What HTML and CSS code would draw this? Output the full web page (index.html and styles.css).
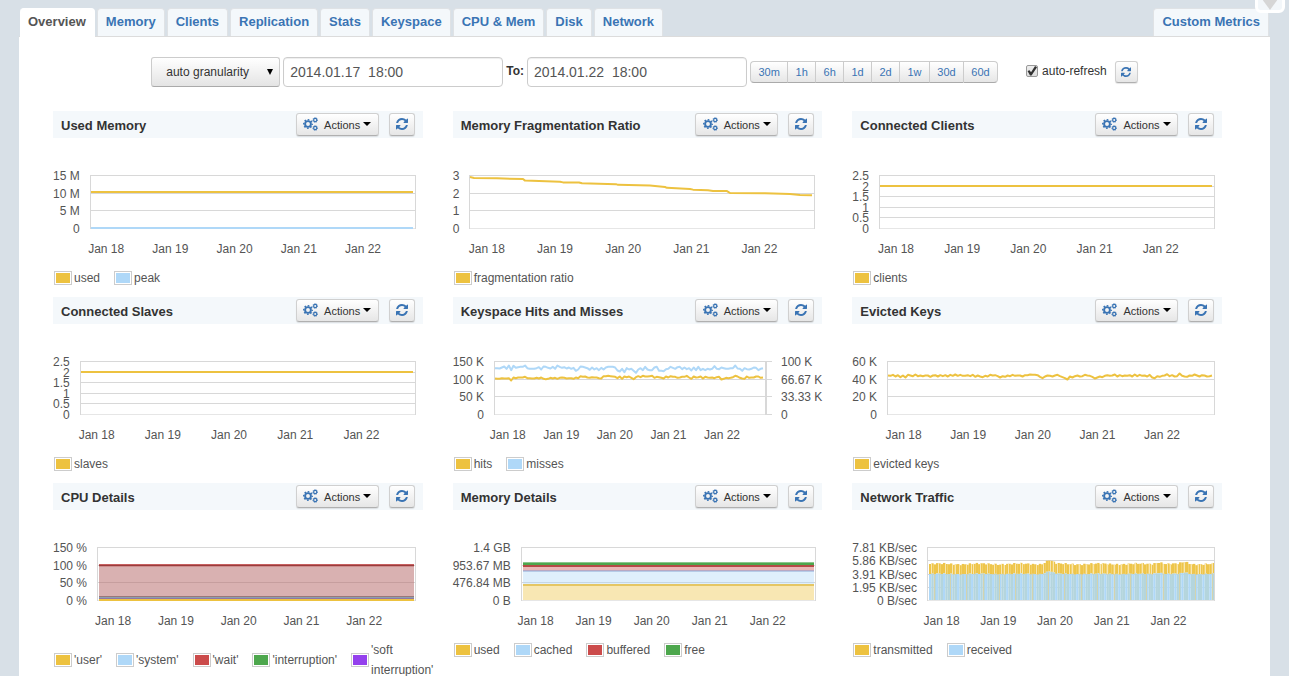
FILE: index.html
```html
<!DOCTYPE html>
<html lang="en">
<head>
<meta charset="utf-8">
<title>Redis Overview</title>
<link rel="stylesheet" href="styles.css">
</head>
<body>
<svg class="defs" aria-hidden="true">
  <symbol id="refresh" viewBox="0 0 1536 1536"><path d="M1511 928q0 5-1 7-64 268-268 434.500t-478 166.500q-146 0-282.500-55t-243.500-157l-129 129q-19 19-45 19t-45-19-19-45v-448q0-26 19-45t45-19h448q26 0 45 19t19 45-19 45l-137 137q71 66 161 102t187 36q134 0 250-65t186-179q11-17 53-117 8-23 30-23h192q13 0 22.500 9.500t9.500 22.500zm25-800v448q0 26-19 45t-45 19h-448q-26 0-45-19t-19-45 19-45l138-138q-148-137-349-137-134 0-250 65t-186 179q-11 17-53 117-8 23-30 23h-199q-13 0-22.500-9.500t-9.500-22.500v-7q65-268 270-434.500t480-166.500q146 0 284 55.500t245 156.500l130-129q19-19 45-19t45 19 19 45z"/></symbol>
  <symbol id="cogs" viewBox="0 0 15 14"><g fill="none" stroke="currentColor">
    <circle cx="5" cy="7" r="2.900" stroke-width="1.900"/>
    <circle cx="5" cy="7" r="4.300" stroke-width="1.400" stroke-dasharray="1.700 1.677" stroke-dashoffset=".85"/>
    <circle cx="12.200" cy="3" r="1.600" stroke-width="1.200"/>
    <circle cx="12.200" cy="3" r="2.400" stroke-width=".8" stroke-dasharray="1 .885"/>
    <circle cx="12.200" cy="11" r="1.600" stroke-width="1.200"/>
    <circle cx="12.200" cy="11" r="2.400" stroke-width=".8" stroke-dasharray="1 .885"/>
  </g></symbol>
</svg>

<div class="dropdown-tab"></div>

<nav class="tabs">
  <a class="tab active" href="#">Overview</a>
  <a class="tab" href="#">Memory</a>
  <a class="tab" href="#">Clients</a>
  <a class="tab" href="#">Replication</a>
  <a class="tab" href="#">Stats</a>
  <a class="tab" href="#">Keyspace</a>
  <a class="tab" href="#">CPU &amp; Mem</a>
  <a class="tab" href="#">Disk</a>
  <a class="tab" href="#">Network</a>
  <a class="tab custom" href="#">Custom Metrics</a>
</nav>

<main class="panel">
  <form class="toolbar">
    <div class="select-wrap">
      <select class="granularity" aria-label="Granularity"><option>auto granularity</option></select>
      <span class="select-arrow"></span>
    </div>
    <input class="date" type="text" aria-label="From" value="2014.01.17  18:00">
    <label class="to" for="to">To:</label>
    <input class="date" id="to" type="text" value="2014.01.22  18:00">
    <div class="ranges">
      <button type="button">30m</button><button type="button">1h</button><button type="button">6h</button><button type="button">1d</button><button type="button">2d</button><button type="button">1w</button><button type="button">30d</button><button type="button">60d</button>
    </div>
    <label class="auto"><input class="check" type="checkbox" checked>auto-refresh</label>
    <button class="btn reload" type="button" aria-label="Refresh"><svg><use href="#refresh"/></svg></button>
  </form>

  <div class="cards" id="cards"></div>
</main>

<template id="card">
  <section class="card">
    <header class="card-head">
      <h2></h2>
      <button class="btn actions" type="button"><svg><use href="#cogs"/></svg>Actions<span class="caret"></span></button>
      <button class="btn refresh" type="button" aria-label="Refresh"><svg><use href="#refresh"/></svg></button>
    </header>
    <div class="chart">
      <div class="y-axis"></div>
      <svg class="plot"></svg>
      <div class="y-axis right"></div>
      <div class="x-axis"><span>Jan 18</span><span>Jan 19</span><span>Jan 20</span><span>Jan 21</span><span>Jan 22</span></div>
    </div>
    <ul class="legend"></ul>
  </section>
</template>
<script src="charts.js"></script>
</body>
</html>
```
FILE: styles.css
```css
* { box-sizing: border-box; }

body {
  margin: 0;
  background: #d8e0e7;
  color: #545454;
  font: 12px/20px "Liberation Sans", Arial, sans-serif;
  overflow: hidden;
}

.defs { position: absolute; width: 0; height: 0; }

.dropdown-tab {
  position: absolute;
  top: -10px;
  right: 4px;
  width: 30px;
  height: 23px;
  border: 3px solid #fff;
  border-radius: 6px;
  background: #f3f7fa;
}
.dropdown-tab::after {
  content: "";
  position: absolute;
  left: 4px;
  bottom: 0;
  border: 8px solid transparent;
  border-top: 11px solid #d6d6d6;
  border-bottom: 0;
}

.tabs {
  display: flex;
  gap: 2px;
  margin: 0 19px;
  padding: 8px 1px 0;
  border-bottom: 1px solid #dcdcdc;
}
.tab {
  height: 28px;
  padding: 0 8px;
  border: 1px solid #dfe2e5;
  border-width: 1px 1px 0 0;
  border-radius: 4px 4px 0 0;
  background: #f4f8fb;
  color: #3a74b4;
  font-size: 13px;
  font-weight: bold;
  line-height: 26px;
  text-decoration: none;
}
.tab.active { height: 29px; margin-bottom: -1px; background: #fff; border-color: #fff; color: #555; }
.tab + .tab { border-left-width: 1px; }
.tab.custom { margin-left: auto; }

.panel {
  margin: 0 19px;
  padding: 20px 48px 20px 34px;
  background: #fff;
}

.toolbar {
  display: flex;
  align-items: center;
  justify-content: center;
  gap: 3px;
  margin: 0 -14px 24px 0;
}
.select-wrap { position: relative; }
.granularity {
  appearance: none;
  display: block;
  width: 129px;
  height: 30px;
  padding: 0 28px 0 14px;
  border: 1px solid #ccc;
  border-bottom-color: #aaa;
  border-radius: 3px;
  background: linear-gradient(#fff, #e4e4e4);
  color: #333;
  font: 12px "Liberation Sans", Arial, sans-serif;
}
.select-arrow {
  position: absolute;
  top: 12px;
  right: 7px;
  border: 3px solid transparent;
  border-top: 6px solid #000;
  border-bottom: 0;
  pointer-events: none;
}
.date {
  width: 220px;
  height: 30px;
  padding: 0 6px;
  border: 1px solid #ccc;
  border-radius: 4px;
  background: #fff;
  box-shadow: inset 0 1px 1px rgba(0, 0, 0, .07);
  color: #555;
  font: 14px "Liberation Sans", Arial, sans-serif;
  white-space: pre;
}
.to { padding-bottom: 2px; color: #333; font-weight: bold; }
.ranges { display: flex; width: 248px; }
.ranges button {
  flex: 1 1 auto;
  height: 22px;
  padding: 0 7px;
  border: 1px solid #ccc;
  border-bottom-color: #aaa;
  border-right-width: 0;
  background: linear-gradient(#fff, #e6e6e6);
  color: #3a74b4;
  font: 11px "Liberation Sans", Arial, sans-serif;
}
.ranges button:first-child { border-radius: 4px 0 0 4px; }
.ranges button:last-child { border-radius: 0 4px 4px 0; border-right-width: 1px; }
.auto { display: flex; align-items: center; margin: 0 5px 0 25px; padding-bottom: 2px; color: #333; }
.check {
  appearance: none;
  position: relative;
  width: 12px;
  height: 12px;
  margin: 0 4px 0 0;
  border: 1px solid #999;
  border-radius: 2px;
  background: linear-gradient(#eee, #ddd);
}
.check:checked::before {
  content: "";
  position: absolute;
  inset: 0;
  background: #333;
  clip-path: polygon(5% 50%, 25% 42%, 40% 62%, 80% 0, 100% 12%, 45% 95%, 30% 95%);
}

.btn {
  display: flex;
  align-items: center;
  justify-content: center;
  padding: 0;
  border: 1px solid #d0d0d0;
  border-bottom-color: #b0b0b0;
  border-radius: 3px;
  background: linear-gradient(#fff, #e6e6e6);
  box-shadow: 0 1px 1px rgba(0, 0, 0, .1);
  color: #333;
  font: 11px "Liberation Sans", Arial, sans-serif;
}
.btn svg { fill: #3a74b4; color: #3a74b4; }
.reload { width: 23px; height: 22px; }
.reload svg { width: 10px; height: 10px; }

.cards {
  display: grid;
  grid-template-columns: repeat(3, minmax(0, 1fr));
  column-gap: 30px;
}
.card { min-height: 186px; }
.card-head {
  display: flex;
  align-items: center;
  height: 27px;
  padding: 0 8px;
  background: #f4f8fb;
}
.card-head h2 {
  flex: 1;
  margin: 0;
  padding-top: 2px;
  color: #333;
  font-size: 13px;
  line-height: 25px;
}
.actions { width: 83px; height: 23px; margin-right: 10px; }
.actions svg { width: 15px; height: 14px; margin: 0 6px 2px 0; }
.caret {
  margin: 0 0 2px 3px;
  border: 4px solid transparent;
  border-top-color: #000;
  border-bottom: 0;
}
.refresh { width: 26px; height: 23px; }
.refresh svg { width: 12px; height: 12px; margin-bottom: 2px; }

.chart {
  display: grid;
  grid-template-columns: auto minmax(0, 1fr) auto;
  padding-top: 37px;
}
.y-axis {
  display: flex;
  flex-direction: column;
  justify-content: space-between;
  height: 54px;
  padding-top: 1px;
  padding-right: 10px;
  text-align: right;
  white-space: nowrap;
}
.y-axis span { height: 0; line-height: 0; }
.y-axis.right { padding: 1px 0 0 7px; text-align: left; }
.y-axis.right:not(:empty) { padding-left: 15px; }
.plot { display: block; width: 100%; height: 54px; overflow: visible; }
.x-axis {
  grid-column: 2;
  display: grid;
  grid-template-columns: repeat(5, 18.8%);
  justify-items: center;
  margin: 10px 0 0 -4.8%;
  white-space: nowrap;
}

.legend {
  display: flex;
  align-items: center;
  gap: 14px;
  margin: 9px 0 0 1px;
  padding: 0;
  list-style: none;
  white-space: nowrap;
}
.legend li { display: flex; align-items: center; gap: 2px; }
.swatch { width: 18px; height: 14px; padding: 1px; border: 1px solid #ccc; }
.swatch::before { content: ""; display: block; height: 100%; background: currentColor; }
.gold { color: #edc240; }
.blue { color: #afd8f8; }
.red { color: #cb4b4b; }
.green { color: #4da74d; }
.purple { color: #9440ed; }
```
FILE: charts.js
```js
const GOLD = '#edc240', BLUE = '#afd8f8';
const H = 53;

// Traces are stored as thirds of a pixel below the plot's top line.
const misses = [84,84,85,82,79,86,76,90,77,83,81,80,80,76,84,86,86,86,84,81,88,79,80,83,85,80,86,76,80,83,81,85,82,86,83,92,88,79,80,82,84,89,82,88,84,90,83,88,82,80,80,80,82,91,94,86,96,84,88,86,92,98,88,84,90,80,88,90,90,82,80,92,92,93,87,86,80,83,86,81,80,87,82,87,84,91,82,90,80,90,86,90,86,88,86,78,86,87,82,84,86,86,84,84,76,85,86,92,84,87,88,86,82,83,90,86,84].map(v => v - 64);
const hits = [115,116,116,114,115,115,114,121,112,114,112,112,112,110,114,114,115,115,113,115,112,116,117,116,113,115,113,116,113,112,113,115,114,114,116,112,114,108,110,109,112,113,111,112,112,114,115,108,108,107,108,109,110,114,109,116,109,111,109,113,117,111,108,111,107,109,109,108,107,113,110,111,113,115,109,112,108,110,110,113,112,110,110,107,112,116,109,112,111,109,115,110,112,113,112,114,111,110,118,116,113,114,113,111,107,109,113,115,116,109,113,112,112,109,109,113,112].map(v => v - 64);
const evicted = [42,43,40,45,41,47,42,48,40,42,44,39,44,42,44,42,42,46,42,41,45,41,44,41,45,40,43,39,43,40,43,43,41,44,40,46,42,45,47,43,45,40,42,41,44,48,44,46,42,44,40,43,42,42,45,41,41,39,40,40,41,46,50,45,42,43,45,42,40,44,47,50,54,45,48,44,42,45,44,40,42,43,46,51,48,45,47,43,41,43,42,39,45,41,44,42,43,41,45,39,44,40,43,42,45,40,48,50,44,46,43,42,38,44,41,45,44,36,43,45,46,42,43,39,42,45,41,42,45,44,42];
const ratio = [[0,2.91],[4,2.86],[27,2.84],[53,2.8],[55,2.71],[90,2.65],[93,2.61],[109,2.6],[112,2.56],[146,2.51],[148,2.47],[180,2.43],[195,2.35],[197,2.3],[220,2.24],[223,2.2],[238,2.16],[243,2.12],[257,2.12],[260,2.01],[295,2],[320,1.95],[330,1.9],[342,1.88]];

const el = (tag, attrs) => {
  const n = document.createElementNS('http://www.w3.org/2000/svg', tag);
  for (const k in attrs) n.setAttribute(k, attrs[k]);
  return n;
};
const rect = (svg, x, y, width, height, fill, opacity = 1) =>
  svg.append(el('rect', { x, y, width, height, fill, 'fill-opacity': opacity }));
const line = (svg, pts, stroke) => svg.append(el('polyline', {
  points: pts.map(p => p.join()).join(' '), fill: 'none', stroke, 'stroke-width': 2, 'stroke-linejoin': 'round' }));
const flat = (svg, w, y, color) => line(svg, [[1, y], [w - 3, y]], color);
const trace = (svg, w, data, color) =>
  line(svg, data.map((v, i) => [1 + i * (w - 4) / (data.length - 1), v / 3 + .5]), color);

function bars(svg, w) {
  const n = 122, step = (w - 3) / n;
  for (let i = 0; i < n; i++) {
    const peak = Math.max(0, 4 - Math.abs(i - 51) * 1.2, 2 - Math.abs(i - 98) * .6, 2 - Math.abs(i - 109) * .7);
    const wave = Math.sin(i * 2.3) * .7 + Math.sin(i * .37) * .5;
    const top = 17 - peak - wave, mid = 27 - peak * .7 - wave * .6;
    const x = 2 + i * step;
    rect(svg, x, top, step, mid - top, GOLD, .95);
    if (i % 3 === 1 || i % 7 === 4) rect(svg, Math.round(x), top, 1, mid - top, '#f8e6b0');
    rect(svg, x, mid, step, H - mid, i % 3 ? '#b4d5dd' : BLUE);
    if (i % 7 === 2) rect(svg, Math.round(x), mid, 1, H - mid, '#d3d3ae');
  }
}
function cpu(svg, w) {
  rect(svg, 2, 18, w - 4, 35, '#b36464', .5);
  rect(svg, 2, 17, w - 4, 1, '#c65f5f');
  rect(svg, 2, 18, w - 4, 1, '#993c3c');
  rect(svg, 2, 19, w - 4, 1, '#cf8f8f');
  rect(svg, 2, 49, w - 4, 1, '#99777a');
  rect(svg, 2, 50, w - 4, 1, '#8c9fae');
  rect(svg, 2, 51, w - 4, 1, '#9077a5');
  rect(svg, 2, 52, w - 4, 2, GOLD);
}
function memory(svg, w) {
  rect(svg, 2, 38, w - 4, 15, GOLD, .4);
  rect(svg, 2, 24, w - 4, 13, BLUE, .4);
  rect(svg, 2, 19, w - 4, 5, '#cb4b4b', .4);
  rect(svg, 2, 15, w - 4, 1, '#8cc58c');
  rect(svg, 2, 16, w - 4, 2, '#4da74d');
  rect(svg, 2, 18, w - 4, 2, '#b54b46');
  rect(svg, 2, 23, w - 4, 1, '#b7a8c4');
  rect(svg, 2, 24, w - 4, 1, '#b5cbe8');
  rect(svg, 2, 37, w - 4, 2, '#e5c663');
}

const charts = [
  { title: 'Used Memory', y: ['15 M', '10 M', '5 M', '0'], legend: ['used', 'peak'],
    draw: (s, w) => { flat(s, w, 17, GOLD); flat(s, w, 53, BLUE); } },
  { title: 'Memory Fragmentation Ratio', y: ['3', '2', '1', '0'], legend: ['fragmentation ratio'],
    draw: (s, w) => line(s, ratio.map(([x, v]) => [1 + x * (w - 4) / 342, .5 + H * (1 - v / 3)]), GOLD) },
  { title: 'Connected Clients', y: ['2.5', '2', '1.5', '1', '0.5', '0'], legend: ['clients'],
    draw: (s, w) => flat(s, w, 11, GOLD) },
  { title: 'Connected Slaves', y: ['2.5', '2', '1.5', '1', '0.5', '0'], legend: ['slaves'],
    draw: (s, w) => flat(s, w, 11, GOLD) },
  { title: 'Keyspace Hits and Misses', y: ['150 K', '100 K', '50 K', '0'], y2: ['100 K', '66.67 K', '33.33 K', '0'],
    legend: ['hits', 'misses'],
    draw: (s, w) => { trace(s, w, misses, BLUE); trace(s, w, hits, GOLD); } },
  { title: 'Evicted Keys', y: ['60 K', '40 K', '20 K', '0'], legend: ['evicted keys'],
    draw: (s, w) => trace(s, w, evicted, GOLD) },
  { title: 'CPU Details', y: ['150 %', '100 %', '50 %', '0 %'],
    legend: ["'user'", "'system'", "'wait'", "'interruption'", "'soft<br>interruption'"], draw: cpu },
  { title: 'Memory Details', y: ['1.4 GB', '953.67 MB', '476.84 MB', '0 B'],
    legend: ['used', 'cached', 'buffered', 'free'], draw: memory },
  { title: 'Network Traffic', y: ['7.81 KB/sec', '5.86 KB/sec', '3.91 KB/sec', '1.95 KB/sec', '0 B/sec'],
    legend: ['transmitted', 'received'], draw: bars }
];

const colors = ['gold', 'blue', 'red', 'green', 'purple'];
const labels = list => list.map(t => `<span>${t}</span>`).join('');

for (const c of charts) {
  const card = document.getElementById('card').content.cloneNode(true);
  card.querySelector('h2').textContent = c.title;
  const [left, right] = card.querySelectorAll('.y-axis');
  left.innerHTML = labels(c.y);
  right.innerHTML = labels(c.y2 || []);
  card.querySelector('.legend').innerHTML =
    c.legend.map((t, i) => `<li><span class="swatch ${colors[i]}"></span><span>${t}</span></li>`).join('');
  c.svg = card.querySelector('.plot');
  document.getElementById('cards').append(card);
}

function render() {
  for (const c of charts) {
    const w = Math.round(c.svg.getBoundingClientRect().width), n = c.y.length - 1;
    c.svg.replaceChildren();
    for (let i = 0; i <= n; i++)
      rect(c.svg, 0, Math.round(i * H / n), w, 1, i === n ? '#e6e6e6' : '#d8d8d8');
    rect(c.svg, 0, 0, 1, H + 1, '#d8d8d8');
    rect(c.svg, w - 1, 0, 1, H + 1, '#d8d8d8');
    if (c.y2) {
      rect(c.svg, w, 0, 1, H + 1, '#d8d8d8');
      for (let i = 0; i <= n; i++) rect(c.svg, w, Math.round(i * H / n), 6, 1, '#d8d8d8');
    }
    c.draw(c.svg, w);
  }
}
render();
addEventListener('resize', render);
```
